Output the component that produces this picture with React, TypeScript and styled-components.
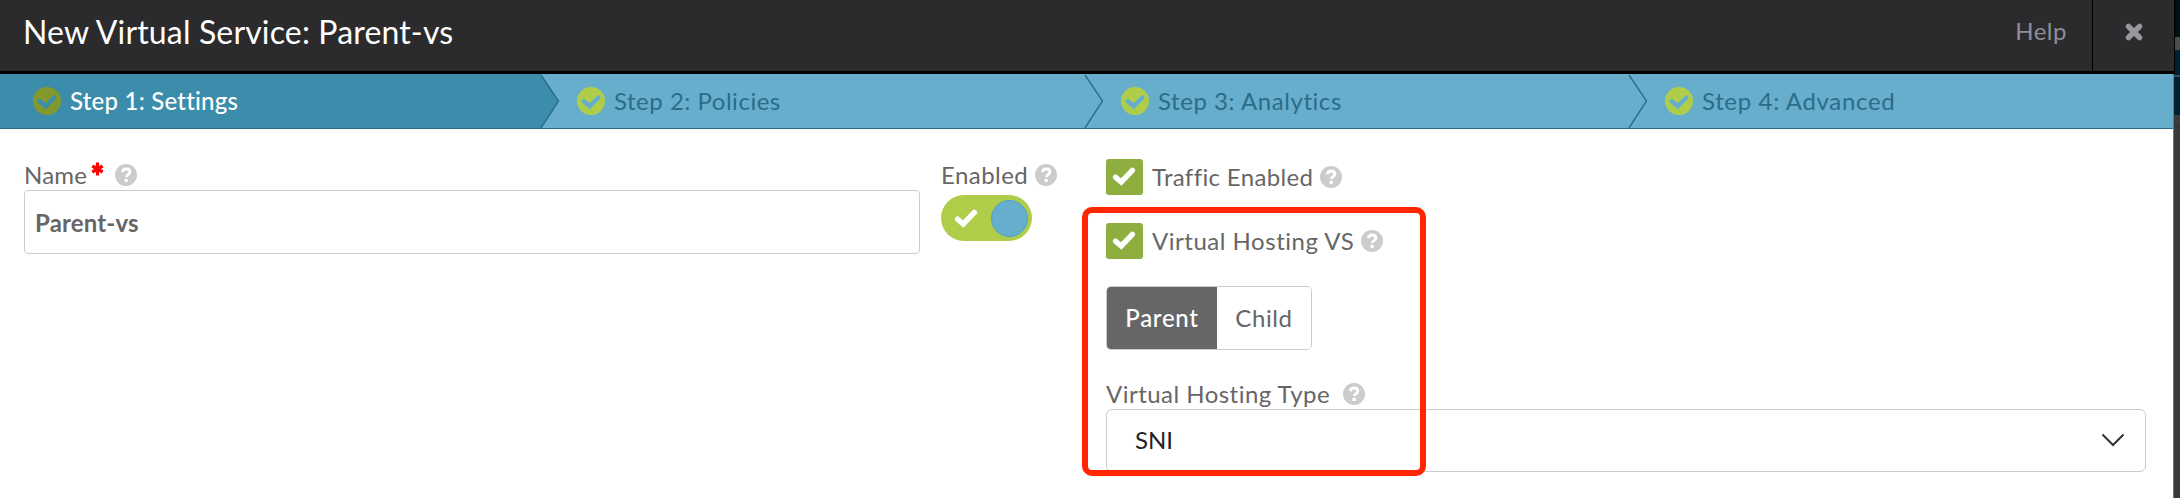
import React from "react";
import styled, { createGlobalStyle, css } from "styled-components";

const GlobalStyle = createGlobalStyle`
  * { box-sizing: border-box; }
  body { margin: 0; background: #3a3a3a; font-family: Lato, "Liberation Sans", sans-serif; overflow: hidden; }
  button, input { font-family: inherit; }
`;

const Page = styled.div`
  display: flex;
  width: 2180px;
  height: 498px;
  overflow: hidden;
`;

const Modal = styled.div`
  position: relative;
  display: flex;
  flex-direction: column;
  width: 2173px;
  background: #fff;
`;

const Header = styled.header`
  display: flex;
  width: 2175px;
  height: 74px;
  background: #2b2b2d;
  border-bottom: 3px solid #000;
  border-right: 1px solid #000;
`;

const Title = styled.h1`
  flex: 1;
  margin: 0;
  padding: 12px 0 0 23px;
  font-size: 32px;
  line-height: 40px;
  font-weight: 400;
  color: #fff;
  white-space: nowrap;
`;

const Text = styled.span<{ $spacing?: number }>`
  letter-spacing: ${(p) => p.$spacing ?? 0}px;
  white-space: nowrap;
`;

const HelpLink = styled.a`
  padding: 16px 25px 0 0;
  font-size: 24px;
  line-height: 30px;
  color: #8e8e96;
`;

const CloseButton = styled.button`
  display: flex;
  width: 82px;
  padding: 23px 0 0 32px;
  border: 0;
  border-left: 1px solid #000;
  background: none;
`;

const Steps = styled.nav`
  display: grid;
  grid-template-columns: repeat(4, 544px);
  height: 55px;
  overflow: hidden;
  background: #66aecb;
  border-bottom: 1px solid #2d6f8b;
`;

const Step = styled.div<{ $active?: boolean }>`
  position: relative;
  display: flex;
  align-items: center;
  gap: 9px;
  padding-left: 33px;
  font-size: 24px;
  line-height: 30px;
  color: ${(p) => (p.$active ? "#fff" : "#2b6c89")};
  ${(p) => p.$active && css`
    background: linear-gradient(90deg, #3c8cab 541px, transparent 541px);
    font-weight: 500;
  `}
`;

const StepArrow = styled.svg`
  position: absolute;
  top: 0;
  left: 540px;
  z-index: 1;
`;

const Form = styled.main`
  display: grid;
  grid-template-columns: 896px 91px 1040px;
  column-gap: 21px;
  padding: 30px 0 0 24px;
`;

const Column = styled.div<{ $shift?: number }>`
  display: flex;
  flex-direction: column;
  align-items: flex-start;
  margin-left: ${(p) => p.$shift ?? 0}px;
`;

const Label = styled.label<{ $gap?: number }>`
  display: flex;
  align-items: center;
  gap: ${(p) => p.$gap ?? 7}px;
  height: 31px;
  font-size: 24px;
  line-height: 30px;
  color: #666;
  white-space: nowrap;
`;

const RequiredMark = styled.svg`
  margin: -12px 3px 0 -4px;
`;

const TextInput = styled.input<{ $spacing: number }>`
  width: 896px;
  height: 64px;
  padding: 0 10px;
  border: 1px solid #ccc;
  border-radius: 4px;
  font-size: 24px;
  font-weight: 700;
  letter-spacing: ${(p) => p.$spacing}px;
  color: #666;
  outline: none;
`;

const Toggle = styled.div`
  display: flex;
  align-items: center;
  justify-content: space-between;
  width: 91px;
  height: 46px;
  margin-top: 5px;
  padding: 0 4px 0 13px;
  border-radius: 23px;
  background: #b0cd49;
`;

const Knob = styled.div`
  width: 37px;
  height: 37px;
  border: 1px solid #4ba1d6;
  border-radius: 50%;
  background: #66aecb;
`;

const CheckRow = styled.div`
  display: flex;
  align-items: center;
  gap: 9px;
  height: 36px;
  margin-bottom: 28px;
`;

const CheckBox = styled.div`
  display: flex;
  align-items: center;
  justify-content: center;
  width: 37px;
  height: 36px;
  padding: 0 1px 1px 0;
  border-radius: 3px;
  background: #8fae40;
`;

const ButtonGroup = styled.div`
  display: flex;
  width: 206px;
  height: 64px;
  margin: -1px 0 28px;
  border: 1px solid #ccc;
  border-radius: 5px;
  overflow: hidden;
`;

const GroupButton = styled.button<{ $selected?: boolean }>`
  width: ${(p) => (p.$selected ? 110 : 94)}px;
  padding: 0 0 1px;
  border: 0;
  background: ${(p) => (p.$selected ? "#666" : "#fff")};
  color: ${(p) => (p.$selected ? "#fff" : "#666")};
  font-size: 24px;
  font-weight: ${(p) => (p.$selected ? 500 : 400)};
`;

const Select = styled.div`
  display: flex;
  align-items: center;
  justify-content: space-between;
  width: 1040px;
  height: 63px;
  padding: 0 20px 2px 28px;
  border: 1px solid #ccc;
  border-radius: 6px;
  font-size: 24px;
  color: #222;
`;

const Highlight = styled.div`
  position: absolute;
  top: 207px;
  left: 1082px;
  width: 344px;
  height: 269px;
  border: 6px solid #ff2600;
  border-radius: 10px;
`;

const Backdrop = styled.div`
  display: flex;
  flex-direction: column;
  width: 7px;
  border-left: 1px solid #777;
  background: #3a3a3a;
`;

const BackdropBand = styled.div<{ $height: number; $color: string }>`
  flex: none;
  height: ${(p) => p.$height}px;
  background: ${(p) => p.$color};
`;

const BackdropRow = styled.div<{ $height: number }>`
  flex: none;
  height: ${(p) => p.$height}px;
  border-bottom: 1px solid #303030;
`;

const CheckMark = ({ size = 24, color = "#fff" }) => (
  <svg width={size} height={(size * 19) / 24} viewBox="0 0 24 19">
    <path d="M3.6 10.200 9.200 15 20.400 3.400" fill="none" stroke={color} strokeWidth="5.400" strokeLinecap="round" strokeLinejoin="miter" />
  </svg>
);

const HelpIcon = () => (
  <svg width="22" height="22" viewBox="0 0 22 22">
    <circle cx="11" cy="11" r="11" fill="#ccc" />
    <path d="M7.3 8.3C7.6 6.1 9 5 11.1 5c2.200 0 3.700 1.200 3.700 3 0 2.500-3.300 2.600-3.500 5" fill="none" stroke="#fff" strokeWidth="2.900" />
    <rect x="9.500" y="14.800" width="3.300" height="3.200" fill="#fff" />
  </svg>
);

const StepIcon = ({ active }: { active?: boolean }) => (
  <svg width="28" height="28" viewBox="0 0 28 28">
    <circle cx="14" cy="14" r="14" fill={active ? "#84992d" : "#b0cd49"} />
    <path d="M6.700 14.200 12.700 19.300 21.300 10.500" fill="none" stroke={active ? "#3c8cab" : "#66aecb"} strokeWidth="4.400" strokeLinecap="round" />
  </svg>
);

const steps = [
  { name: "Step 1: Settings", spacing: 0.22 },
  { name: "Step 2: Policies", spacing: 0.52 },
  { name: "Step 3: Analytics", spacing: 0.56 },
  { name: "Step 4: Advanced", spacing: 0.66 },
];

export default function App() {
  return (
    <Page>
      <GlobalStyle />
      <Modal>
        <Header>
          <Title><Text $spacing={0.15}>New Virtual Service: Parent-vs</Text></Title>
          <HelpLink><Text $spacing={0.5}>Help</Text></HelpLink>
          <CloseButton aria-label="Close">
            <svg width="18" height="18" viewBox="0 0 18 18">
              <path d="M3.500 3.500 14.500 14.500M14.500 3.500 3.500 14.500" stroke="#97979d" strokeWidth="5.500" strokeLinecap="round" />
            </svg>
          </CloseButton>
        </Header>
        <Steps>
          {steps.map((step, i) => (
            <Step key={step.name} $active={i === 0}>
              <StepIcon active={i === 0} />
              <Text $spacing={step.spacing}>{step.name}</Text>
              {i < 3 && (
                <StepArrow width="20" height="54" viewBox="0 0 20 54">
                  <path d="M1 1 18.500 27 1 54" fill={i === 0 ? "#3c8cab" : "none"} stroke="#2b6c89" strokeWidth="1.400" />
                </StepArrow>
              )}
            </Step>
          ))}
        </Steps>
        <Form>
          <Column>
            <Label $gap={8}>
              <Text $spacing={0.2}>Name</Text>
              <RequiredMark width="13" height="14" viewBox="0 0 12 14">
                <path d="M6 0.500V13.500M0.800 4 11.200 10M11.200 4 0.800 10" stroke="#f00" strokeWidth="3.300" />
              </RequiredMark>
              <HelpIcon />
            </Label>
            <TextInput $spacing={0.15} defaultValue="Parent-vs" />
          </Column>
          <Column>
            <Label><Text $spacing={0.45}>Enabled</Text><HelpIcon /></Label>
            <Toggle><CheckMark /><Knob /></Toggle>
          </Column>
          <Column $shift={53}>
            <CheckRow>
              <CheckBox><CheckMark /></CheckBox>
              <Label><Text $spacing={0.35}>Traffic Enabled</Text><HelpIcon /></Label>
            </CheckRow>
            <CheckRow>
              <CheckBox><CheckMark /></CheckBox>
              <Label><Text $spacing={0.52}>Virtual Hosting VS</Text><HelpIcon /></Label>
            </CheckRow>
            <ButtonGroup>
              <GroupButton $selected><Text $spacing={0.7}>Parent</Text></GroupButton>
              <GroupButton><Text $spacing={0.6}>Child</Text></GroupButton>
            </ButtonGroup>
            <Label $gap={13}><Text $spacing={0.47}>Virtual Hosting Type</Text><HelpIcon /></Label>
            <Select>
              <Text>SNI</Text>
              <svg width="24" height="14" viewBox="0 0 24 14">
                <path d="M1.500 1.500 12 12 22.500 1.500" fill="none" stroke="#333" strokeWidth="2" />
              </svg>
            </Select>
          </Column>
        </Form>
        <Highlight />
      </Modal>
      <Backdrop>
        <BackdropBand $height={37} $color="#000f14" />
        <BackdropBand $height={13} $color="#4d4d4d" />
        <BackdropBand $height={25} $color="#002033" />
        <BackdropBand $height={2} $color="#3f4d54" />
        <BackdropBand $height={38} $color="#002033" />
        <BackdropRow $height={13} />
        <BackdropRow $height={83} />
        <BackdropRow $height={92} />
        <BackdropRow $height={92} />
        <BackdropRow $height={92} />
      </Backdrop>
    </Page>
  );
}
